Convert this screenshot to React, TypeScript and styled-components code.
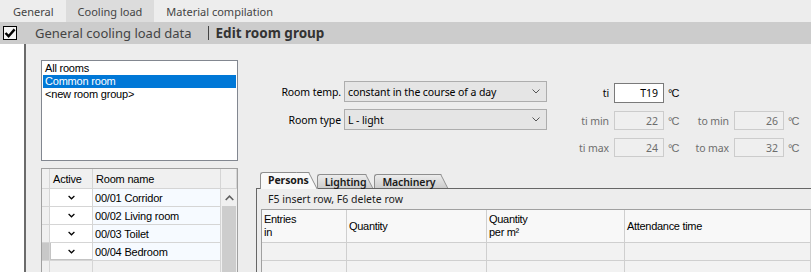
import React from 'react';
import styled, { createGlobalStyle } from 'styled-components';

const SEGOE = '"Noto Sans", "Segoe UI", Arial, sans-serif';
const MSS = '"Liberation Sans", Arial, sans-serif';

const GlobalStyle = createGlobalStyle`
  html, body { margin: 0; padding: 0; background: #ededed; }
  body { font-family: ${SEGOE}; overflow: hidden; }
  * { box-sizing: border-box; }
`;

const Page = styled.div`
  width: 811px;
  height: 272px;
  overflow: hidden;
  display: flex;
  flex-direction: column;
  background: #ededed;
`;

const TopTabs = styled.nav`
  height: 22px;
  flex: none;
  display: flex;
  padding-left: 1px;
  background: #ededed;
`;

const TopTab = styled.div<{ $active?: boolean }>`
  display: flex;
  align-items: center;
  padding: 0 12px;
  font-size: 11px;
  color: #444;
  background: ${p => (p.$active ? '#dcdcdc' : 'transparent')};
`;

const HeaderBar = styled.div`
  height: 22px;
  flex: none;
  display: flex;
  align-items: center;
  background: #cccccc;
  padding-left: 3px;
`;

const CheckBox = styled.span`
  width: 14px;
  height: 14px;
  border: 1px solid #000;
  background: #f4f4f4;
  display: flex;
  align-items: center;
  justify-content: center;
`;

const Title = styled.span`
  margin-left: 18px;
  font-size: 13px;
  color: #444;
`;

const Sep = styled.span`
  width: 1px;
  height: 14px;
  background: #444;
  margin: 0 7px 0 16px;
`;

const TitleBold = styled.span`
  font-size: 13.5px;
  font-weight: 700;
  color: #333;
`;

const Main = styled.div`
  flex: 1;
  display: flex;
  min-height: 0;
`;

const Gutter = styled.div`
  width: 24px;
  flex: none;
  background: #fff;
`;

const Divider = styled.div`
  width: 2px;
  flex: none;
  background: #6b6b6b;
`;

const Content = styled.div`
  flex: 1;
  display: flex;
  padding-left: 15px;
  min-width: 0;
`;

/* ---------- left column ---------- */

const LeftCol = styled.div`
  width: 197px;
  flex: none;
  display: flex;
  flex-direction: column;
  padding-top: 16px;
`;

const ListBox = styled.div`
  height: 101px;
  flex: none;
  border: 1px solid #828790;
  background: #fff;
  padding: 1px;
`;

const ListItem = styled.div<{ $selected?: boolean }>`
  height: 13px;
  line-height: 13px;
  padding-left: 2px;
  font: 11px ${MSS};
  letter-spacing: -0.2px;
  color: ${p => (p.$selected ? '#fff' : '#000')};
  background: ${p => (p.$selected ? '#0078d7' : 'transparent')};
`;

const LeftGrid = styled.div`
  margin-top: 7px;
  flex: 1;
  display: flex;
  flex-direction: column;
  border: 1px solid #a0a0a0;
  border-bottom: 0;
  font: 11px ${MSS};
  letter-spacing: -0.2px;
  color: #000;
  min-height: 0;
`;

const GridHead = styled.div`
  height: 20px;
  flex: none;
  display: flex;
`;

const HeadCell = styled.div<{ $w?: number }>`
  width: ${p => (p.$w ? `${p.$w}px` : 'auto')};
  flex: ${p => (p.$w ? 'none' : 1)};
  background: #f0f0f0;
  border-right: 1px solid #d5d5d5;
  border-bottom: 1px solid #d5d5d5;
  padding-left: 3px;
  display: flex;
  align-items: center;
  white-space: nowrap;
`;

const GridBody = styled.div`
  flex: 1;
  display: flex;
  min-height: 0;
`;

const Rows = styled.div`
  width: 179px;
  flex: none;
  display: flex;
  flex-direction: column;
`;

const Row = styled.div`
  height: 18px;
  flex: none;
  display: flex;
`;

const RowHead = styled.div<{ $current?: boolean }>`
  width: 8px;
  flex: none;
  background: ${p => (p.$current ? '#c8c8c8' : '#f0f0f0')};
  border-right: 1px solid #d5d5d5;
  border-bottom: 1px solid #d5d5d5;
`;

const ActiveCell = styled.div<{ $focus?: boolean; $empty?: boolean }>`
  width: 43px;
  flex: none;
  background: ${p => (p.$empty ? '#f0f0f0' : '#fff')};
  border-right: 1px solid #d5d5d5;
  border-bottom: 1px solid #d5d5d5;
  box-shadow: ${p => (p.$focus ? 'inset 1px -1px 0 #c4c4c4' : 'none')};
  display: flex;
  align-items: center;
  justify-content: center;
`;

const NameCell = styled.div<{ $empty?: boolean }>`
  width: 128px;
  flex: none;
  background: ${p => (p.$empty ? '#f0f0f0' : '#f6faff')};
  border-right: 1px solid #d5d5d5;
  border-bottom: 1px solid #d5d5d5;
  padding-left: 2px;
  display: flex;
  align-items: center;
  white-space: nowrap;
`;

const ScrollBar = styled.div`
  flex: 1;
  display: flex;
  flex-direction: column;
  background: #f0f0f0;
`;

const ScrollArrow = styled.div`
  height: 17px;
  flex: none;
  display: flex;
  align-items: center;
  justify-content: center;
`;

const ScrollThumb = styled.div`
  flex: 1;
  margin: 0 1px;
  background: #cdcdcd;
`;

/* ---------- right column ---------- */

const RightCol = styled.div`
  flex: 1;
  margin-left: 18px;
  display: flex;
  flex-direction: column;
  min-width: 0;
`;

const FormArea = styled.div`
  height: 124px;
  flex: none;
  display: flex;
  align-items: flex-start;
`;

const ComboGrid = styled.div`
  margin-top: 37px;
  display: grid;
  grid-template-columns: 85px 203px;
  grid-auto-rows: 21px;
  column-gap: 3px;
  row-gap: 7px;
  align-items: center;
`;

const FieldLabel = styled.span<{ $disabled?: boolean }>`
  text-align: right;
  font-size: 10.5px;
  letter-spacing: -0.1px;
  white-space: nowrap;
  color: ${p => (p.$disabled ? '#6d6d6d' : '#000')};
`;

const TempLabel = styled(FieldLabel)`
  padding-right: 5px;
`;

const Combo = styled.div`
  height: 21px;
  border: 1px solid #adadad;
  background: #e5e5e5;
  display: flex;
  align-items: center;
  justify-content: space-between;
  padding: 0 6px 0 3px;
  font-size: 10.5px;
  letter-spacing: -0.1px;
  color: #000;
  white-space: nowrap;
`;

const TempGrid = styled.div`
  margin: 39px 0 0 13px;
  display: grid;
  grid-template-columns: 54px 50px 22px 48px 50px 20px;
  grid-template-rows: 20px 19px 19px;
  row-gap: 8px;
  align-items: center;
`;

const TempInput = styled.div<{ $disabled?: boolean }>`
  height: 100%;
  border: 1px solid ${p => (p.$disabled ? '#cccccc' : '#7a7a7a')};
  background: ${p => (p.$disabled ? '#efefef' : '#fff')};
  color: ${p => (p.$disabled ? '#6d6d6d' : '#000')};
  font-size: 10.5px;
  display: flex;
  align-items: center;
  justify-content: flex-end;
  padding-right: 5px;
`;

const Unit = styled.span<{ $disabled?: boolean }>`
  padding-left: 4px;
  font: 11px ${MSS};
  letter-spacing: -0.8px;
  color: ${p => (p.$disabled ? '#6d6d6d' : '#000')};
`;

const TabArea = styled.div`
  flex: 1;
  display: flex;
  flex-direction: column;
  min-height: 0;
`;

const TabStrip = styled.div`
  height: 20px;
  flex: none;
  display: flex;
  align-items: flex-end;
  padding-left: 4px;
  position: relative;
  z-index: 1;
`;

const Tab = styled.div<{ $active?: boolean; $pr?: number }>`
  position: relative;
  z-index: ${p => (p.$active ? 2 : 1)};
  height: ${p => (p.$active ? 17 : 14)}px;
  margin-bottom: ${p => (p.$active ? -1 : 0)}px;
  margin-right: 8px;
  padding: 0 ${p => p.$pr ?? 0}px 0 7px;
  border: 1px solid #8e8e8e;
  border-right: 0;
  border-bottom: 0;
  border-top-left-radius: 3px;
  background: ${p => (p.$active ? '#f9f9f9' : 'linear-gradient(#ececec, #cdcdcd)')};
  font-size: 10.5px;
  letter-spacing: -0.1px;
  font-weight: ${p => (p.$active ? 700 : 600)};
  color: #1a1a1a;
  display: flex;
  align-items: ${p => (p.$active ? 'flex-start' : 'center')};
  line-height: 14px;
  white-space: nowrap;

  &::after {
    content: '';
    position: absolute;
    top: -1px;
    bottom: 0;
    right: 0;
    width: 12px;
    background: inherit;
    border-top: 1px solid #8e8e8e;
    border-right: 1px solid #8e8e8e;
    transform: skewX(27deg);
    transform-origin: top left;
    z-index: -1;
  }
`;

const TabPanel = styled.div`
  flex: 1;
  display: flex;
  flex-direction: column;
  border-top: 1px solid #666;
  border-left: 1px solid #666;
  padding-left: 4px;
  min-height: 0;
`;

const HintRow = styled.div`
  height: 20px;
  flex: none;
  display: flex;
  align-items: center;
  padding-left: 7px;
  font-size: 10.5px;
  color: #1a1a1a;
`;

const DataGrid = styled.div`
  flex: 1;
  display: grid;
  grid-template-columns: 85px 140px 138px 1fr;
  grid-template-rows: 33px 18px 18px 18px;
  border-top: 1px solid #a0a0a0;
  border-left: 1px solid #a0a0a0;
  font: 11px ${MSS};
  letter-spacing: -0.3px;
  color: #000;
`;

const DataHead = styled.div`
  background: #f8f8f8;
  border-right: 1px solid #cfcfcf;
  border-bottom: 1px solid #cfcfcf;
  padding-left: 2px;
  display: flex;
  align-items: center;
  line-height: 13px;
  white-space: pre-line;
`;

const DataCell = styled.div`
  background: #f2f2f2;
  border-right: 1px solid #cfcfcf;
  border-bottom: 1px solid #cfcfcf;
`;

/* ---------- icons ---------- */

const BigCheck = () => (
  <svg width="12" height="12" viewBox="0 0 12 12">
    <path d="M1.5 6 L4.6 9.2 L10.6 2.4" fill="none" stroke="#000" strokeWidth="2.4" />
  </svg>
);

const SmallCheck = () => (
  <svg width="7" height="5" viewBox="0 0 7 5">
    <polyline points="0.6,1 3.5,3.8 6.4,1" fill="none" stroke="#000" strokeWidth="1.2" />
  </svg>
);

const UpChevron = () => (
  <svg width="9" height="6" viewBox="0 0 9 6">
    <polyline points="0.7,5 4.5,1.2 8.3,5" fill="none" stroke="#606060" strokeWidth="1.6" />
  </svg>
);

const DownChevron = () => (
  <svg width="8" height="5" viewBox="0 0 8 5">
    <polyline points="0.5,0.5 4,4 7.5,0.5" fill="none" stroke="#555" strokeWidth="1" />
  </svg>
);

/* ---------- data ---------- */

const groups = ['All rooms', 'Common room', '<new room group>'];
const rooms = ['00/01 Corridor', '00/02 Living room', '00/03 Toilet', '00/04 Bedroom'];
const dataHeads = ['Entries\nin', 'Quantity', 'Quantity\nper m²', 'Attendance time'];

export default function App() {
  return (
    <>
      <GlobalStyle />
      <Page>
        <TopTabs>
          <TopTab>General</TopTab>
          <TopTab $active>Cooling load</TopTab>
          <TopTab>Material compilation</TopTab>
        </TopTabs>
        <HeaderBar>
          <CheckBox>
            <BigCheck />
          </CheckBox>
          <Title>General cooling load data</Title>
          <Sep />
          <TitleBold>Edit room group</TitleBold>
        </HeaderBar>
        <Main>
          <Gutter />
          <Divider />
          <Content>
            <LeftCol>
              <ListBox>
                {groups.map((g, i) => (
                  <ListItem key={g} $selected={i === 1}>
                    {g}
                  </ListItem>
                ))}
              </ListBox>
              <LeftGrid>
                <GridHead>
                  <HeadCell $w={8} />
                  <HeadCell $w={43}>Active</HeadCell>
                  <HeadCell $w={128}>Room name</HeadCell>
                  <HeadCell />
                </GridHead>
                <GridBody>
                  <Rows>
                    {rooms.map((r, i) => (
                      <Row key={r}>
                        <RowHead $current={i === 3} />
                        <ActiveCell $focus={i === 3}>
                          <SmallCheck />
                        </ActiveCell>
                        <NameCell>{r}</NameCell>
                      </Row>
                    ))}
                    <Row>
                      <RowHead />
                      <ActiveCell $empty />
                      <NameCell $empty />
                    </Row>
                  </Rows>
                  <ScrollBar>
                    <ScrollArrow>
                      <UpChevron />
                    </ScrollArrow>
                    <ScrollThumb />
                  </ScrollBar>
                </GridBody>
              </LeftGrid>
            </LeftCol>
            <RightCol>
              <FormArea>
                <ComboGrid>
                  <FieldLabel>Room temp.</FieldLabel>
                  <Combo>
                    <span>constant in the course of a day</span>
                    <DownChevron />
                  </Combo>
                  <FieldLabel>Room type</FieldLabel>
                  <Combo>
                    <span>L - light</span>
                    <DownChevron />
                  </Combo>
                </ComboGrid>
                <TempGrid>
                  <TempLabel>ti</TempLabel>
                  <TempInput>T19</TempInput>
                  <Unit>°C</Unit>
                  <span />
                  <span />
                  <span />
                  <TempLabel $disabled>ti min</TempLabel>
                  <TempInput $disabled>22</TempInput>
                  <Unit $disabled>°C</Unit>
                  <TempLabel $disabled>to min</TempLabel>
                  <TempInput $disabled>26</TempInput>
                  <Unit $disabled>°C</Unit>
                  <TempLabel $disabled>ti max</TempLabel>
                  <TempInput $disabled>24</TempInput>
                  <Unit $disabled>°C</Unit>
                  <TempLabel $disabled>to max</TempLabel>
                  <TempInput $disabled>32</TempInput>
                  <Unit $disabled>°C</Unit>
                </TempGrid>
              </FormArea>
              <TabArea>
                <TabStrip>
                  <Tab $active>Persons</Tab>
                  <Tab>Lighting</Tab>
                  <Tab $pr={5}>Machinery</Tab>
                </TabStrip>
                <TabPanel>
                  <HintRow>F5 insert row, F6 delete row</HintRow>
                  <DataGrid>
                    {dataHeads.map(h => (
                      <DataHead key={h}>{h}</DataHead>
                    ))}
                    {Array.from({ length: 12 }).map((_, i) => (
                      <DataCell key={i} />
                    ))}
                  </DataGrid>
                </TabPanel>
              </TabArea>
            </RightCol>
          </Content>
        </Main>
      </Page>
    </>
  );
}
